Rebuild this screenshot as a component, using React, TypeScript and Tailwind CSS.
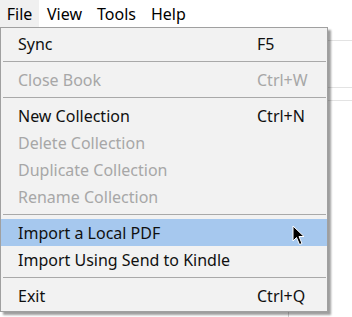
import React from "react";

type Item =
  | { sep: true }
  | { label: string; shortcut?: string; disabled?: boolean; active?: boolean };

const items: Item[] = [
  { label: "Sync", shortcut: "F5" },
  { sep: true },
  { label: "Close Book", shortcut: "Ctrl+W", disabled: true },
  { sep: true },
  { label: "New Collection", shortcut: "Ctrl+N" },
  { label: "Delete Collection", disabled: true },
  { label: "Duplicate Collection", disabled: true },
  { label: "Rename Collection", disabled: true },
  { sep: true },
  { label: "Import a Local PDF", active: true },
  { label: "Import Using Send to Kindle" },
  { sep: true },
  { label: "Exit", shortcut: "Ctrl+Q" },
];

function Cursor() {
  return (
    <svg
      width="14"
      height="21"
      viewBox="0 0 14 21"
      className="absolute left-[292px] top-[225px]"
    >
      <path
        d="M1 1 L1 16 L4.5 12.5 L7.5 19.5 L10 18.5 L7 11.5 L12 11.5 Z"
        fill="#000"
        stroke="#fff"
        strokeWidth="1"
        strokeLinejoin="round"
      />
    </svg>
  );
}

export default function App() {
  return (
    <div
      className="relative h-[317px] w-[352px] overflow-hidden bg-white text-[16px] text-black"
      style={{ fontFamily: '"Noto Sans", "Open Sans", sans-serif' }}
    >
      {/* menu bar */}
      <div className="flex h-[28px] items-center bg-white">
        <div className="flex h-full w-[39px] items-center justify-center bg-[#f0f0f0]">
          File
        </div>
        <div className="ml-[8px]">View</div>
        <div className="ml-[15px]">Tools</div>
        <div className="ml-[15px]">Help</div>
      </div>

      {/* page behind the menu */}
      <div className="flex flex-col">
        <div className="h-[13px] border-b border-[#e3e3e3]" />
        <div className="h-[47px] border-b border-[#e3e3e3]" />
        <div className="h-[13px] border-b border-[#e3e3e3]" />
        <div className="ml-[288px] mt-[205px] h-[20px] border-l border-[#d0d0d0]" />
      </div>

      {/* dropdown */}
      <div className="absolute left-0 top-[27px] w-[328px] border border-[#a0a0a0] bg-[#f2f2f2] py-[2px] shadow-[3px_3px_2px_rgba(0,0,0,0.38)]">
        {items.map((it, i) =>
          "sep" in it ? (
            <div key={i} className="py-[4px]">
              <div className="ml-[2px] mr-[1px] h-px bg-[#a9a9a9]" />
            </div>
          ) : (
            <div
              key={i}
              className={
                "flex h-[27px] items-center " +
                (it.active ? "bg-[#a6c8ee] " : "") +
                (it.disabled ? "text-[#a7a7a7]" : "text-[#101010]")
              }
            >
              <span className="w-[256px] pl-[17px]">{it.label}</span>
              <span>{it.shortcut}</span>
            </div>
          ),
        )}
      </div>

      <Cursor />
    </div>
  );
}
